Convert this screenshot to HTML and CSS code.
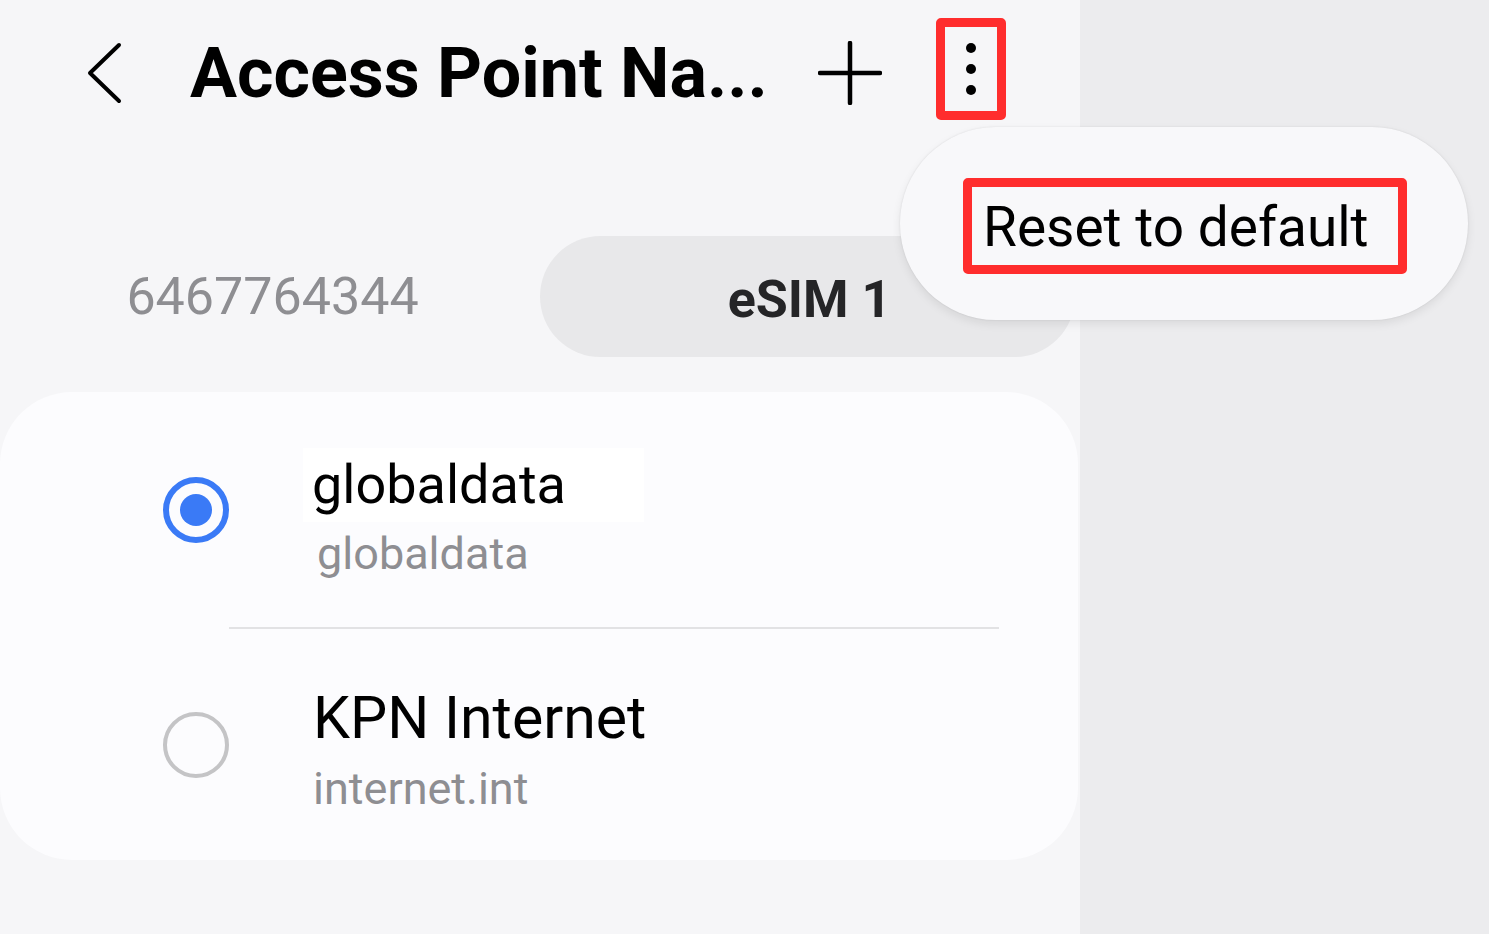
FILE: index.html
```html
<!DOCTYPE html>
<html>

<head>
    <title>Access Point Names</title>
    <meta name="viewport" content="width=device-width, initial-scale=1.0">
    <link rel="stylesheet" href="styles.css">
</head>

<body>
    <div class="screen">
        <div class="top-bar">
            <button class="icon-btn back-btn" type="button">
                <svg width="40" height="64" viewBox="0 0 40 64">
                    <path d="M34 4 L5 32 L34 60" fill="none" stroke="#000" stroke-width="4" stroke-linecap="round" stroke-linejoin="round"/>
                </svg>
            </button>
            <h1 class="title">Access Point Na...</h1>
            <button class="icon-btn add-btn" type="button">
                <svg width="64" height="64" viewBox="0 0 64 64">
                    <path d="M32 2 V62 M2 32 H62" fill="none" stroke="#000" stroke-width="4.5" stroke-linecap="round"/>
                </svg>
            </button>
            <button class="icon-btn more-btn marked" type="button">
                <span class="dot"></span>
                <span class="dot"></span>
                <span class="dot"></span>
            </button>
        </div>

        <div class="sim-tabs">
            <div class="sim-tab">6467764344</div>
            <div class="sim-tab active">eSIM 1</div>
        </div>

        <div class="apn-card">
            <div class="apn-row first">
                <span class="radio checked"></span>
                <div class="apn-text">
                    <div class="apn-name highlighted">globaldata</div>
                    <div class="apn-sub">globaldata</div>
                </div>
            </div>
            <div class="divider"></div>
            <div class="apn-row">
                <span class="radio"></span>
                <div class="apn-text">
                    <div class="apn-name">KPN Internet</div>
                    <div class="apn-sub">internet.int</div>
                </div>
            </div>
        </div>

        <!-- overflow menu opened from the kebab button -->
        <div class="popup-menu">
            <div class="menu-item marked">Reset to default</div>
        </div>
    </div>
</body>
</html>
```

FILE: styles.css
```css
* {
    box-sizing: border-box;
}

body {
    margin: 0;
    background-color: #ececee;
    font-family: Roboto, "Noto Sans", sans-serif;
    width: 1489px;
    height: 934px;
    overflow: hidden;
}

.screen {
    position: relative;
    width: 1080px;
    height: 934px;
    background-color: #f6f6f8;
}

.top-bar {
    display: flex;
    align-items: center;
    height: 146px;
    padding-left: 85px;
}

.icon-btn {
    background: none;
    border: none;
    padding: 0;
    display: flex;
    align-items: center;
    justify-content: center;
}

.back-btn {
    width: 40px;
    height: 64px;
}

.title {
    margin: 0 0 0 65px;
    font-size: 70px;
    font-weight: 700;
    letter-spacing: 0;
    color: #000000;
    width: 573px;
    white-space: nowrap;
}

.add-btn {
    width: 64px;
    height: 64px;
    margin-left: 55px;
}

.more-btn {
    flex-direction: column;
    gap: 11px;
    width: 70px;
    height: 102px;
    margin-left: 54px;
    margin-top: -8px;
}

.dot {
    width: 10px;
    height: 10px;
    border-radius: 50%;
    background-color: #000000;
}

/* red annotation frames */
.marked {
    border: 9px solid #ff2d2d;
    border-radius: 5px;
}

.sim-tabs {
    display: flex;
    margin: 90px 5px 0 5px;
    height: 121px;
}

.sim-tab {
    flex: 0 0 535px;
    display: flex;
    align-items: center;
    justify-content: center;
    font-size: 52px;
    color: #8e8e92;
    border-radius: 61px;
}

.sim-tab.active {
    background-color: #e8e8ea;
    color: #252527;
    font-weight: 700;
    padding-top: 6px;
    padding-left: 4px;
}

.apn-card {
    margin-top: 35px;
    width: 1078px;
    background-color: #fcfcfe;
    border-radius: 72px;
}

.apn-row {
    display: flex;
    align-items: center;
    height: 231px;
    padding-left: 163px;
}

.apn-row.first {
    height: 235px;
}

.radio {
    width: 66px;
    height: 66px;
    border-radius: 50%;
    border: 4px solid #c4c4c6;
    flex-shrink: 0;
}

.radio.checked {
    border: 6px solid #3a7af6;
    display: flex;
    align-items: center;
    justify-content: center;
}

.radio.checked::after {
    content: "";
    width: 32px;
    height: 32px;
    border-radius: 50%;
    background-color: #3a7af6;
}

.apn-text {
    margin-left: 84px;
    margin-top: 12px;
}

.first .apn-text {
    margin-top: 16px;
}

.apn-name {
    font-size: 59px;
    color: #000000;
    line-height: 70px;
}

.highlighted {
    font-size: 54px;
    line-height: 74px;
    background-color: #ffffff;
    width: 341px;
    margin-left: -10px;
    padding-left: 9px;
    margin-top: -4px;
}

.apn-sub {
    font-size: 45px;
    color: #8e8e92;
    line-height: 60px;
    margin-top: 6px;
}

.first .apn-sub {
    margin-top: 2px;
    padding-left: 4px;
}

.divider {
    height: 2px;
    margin: 0 79px 0 229px;
    background-color: #e2e2e4;
}

.popup-menu {
    position: absolute;
    left: 900px;
    top: 127px;
    width: 568px;
    height: 193px;
    border-radius: 96px;
    background-color: #f8f8fa;
    box-shadow: 0 4px 10px rgba(0, 0, 0, 0.08), 0 0 2px rgba(0, 0, 0, 0.1);
    padding: 51px 0 0 63px;
}

.menu-item {
    width: 444px;
    height: 96px;
    font-size: 55px;
    color: #000000;
    padding-left: 11px;
    line-height: 80px;
}
```
